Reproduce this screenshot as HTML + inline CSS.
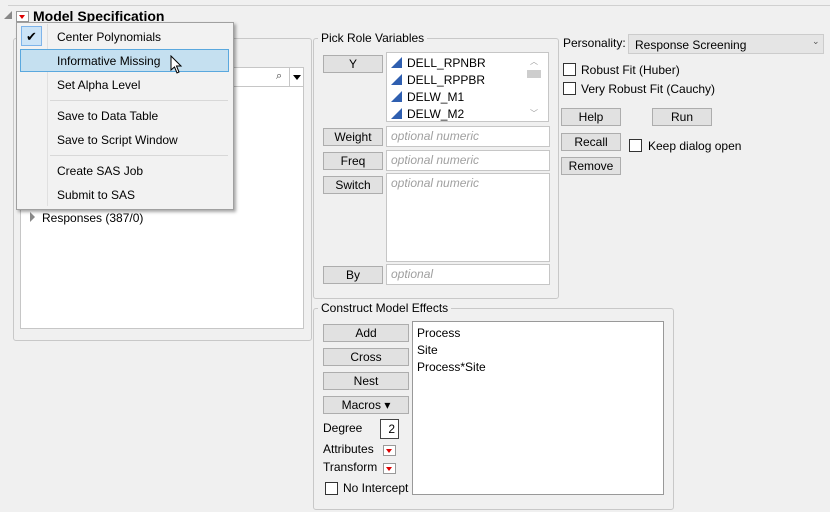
<!DOCTYPE html>
<html><head><style>
body{margin:0;width:830px;height:512px;background:#f0f0f0;font-family:"Liberation Sans",sans-serif;font-size:12px;color:#000;position:relative;overflow:hidden}
.a{position:absolute}
.g{position:absolute;border:1px solid #c8c8c8;border-radius:3px}
.gl{position:absolute;background:#f0f0f0;padding:0 3px;top:-8px;left:4px;font-size:12px}
.b{position:absolute;background:#e1e1e1;border:1px solid #adadad;text-align:center;line-height:16px;box-sizing:border-box;height:18px}
.f{position:absolute;background:#fff;border:1px solid #c6c6c6;box-sizing:border-box}
.ph{color:#a0a0a0;font-style:italic;padding:2px 4px}
.cb{position:absolute;width:11px;height:11px;border:1px solid #333;background:#fff}
.tri{display:inline-block;width:0;height:0;border-left:11px solid transparent;border-bottom:11px solid #2f5fb0;margin-right:5px;vertical-align:-1px}
.rd{position:absolute;width:11px;height:9px;border:1px solid #999;background:#fff}
.rd:after{content:"";position:absolute;left:2px;top:3px;border-left:3.5px solid transparent;border-right:3.5px solid transparent;border-top:4px solid #d00}
</style></head><body>
<div class="a" style="left:8px;top:5px;width:822px;height:1px;background:#d0d0d0"></div>
<div class="a" style="left:4px;top:11px;width:0;height:0;border-left:8px solid transparent;border-bottom:8px solid #888"></div>
<div class="rd" style="left:16px;top:11px"></div>
<div class="a" style="left:33px;top:8px;font-size:14px;font-weight:bold">Model Specification</div>

<div class="g" style="left:13px;top:38px;width:297px;height:301px"></div>
<div class="f" style="left:20px;top:67px;width:284px;height:20px"></div>
<div class="a" style="left:276px;top:70px;font-size:11px;color:#444">⌕</div>
<div class="a" style="left:289px;top:67px;width:1px;height:20px;background:#c6c6c6"></div>
<div class="a" style="left:293px;top:75px;border-left:4px solid transparent;border-right:4px solid transparent;border-top:5px solid #000"></div>
<div class="f" style="left:20px;top:86px;width:284px;height:243px"></div>
<div class="a" style="left:30px;top:212px;border-top:5px solid transparent;border-bottom:5px solid transparent;border-left:5px solid #888"></div>
<div class="a" style="left:42px;top:211px">Responses (387/0)</div>

<div class="a" style="left:16px;top:22px;width:216px;height:186px;background:#f2f2f2;border:1px solid #a0a0a0;box-shadow:2px 2px 3px rgba(0,0,0,.35)"></div>
<div class="a" style="left:47px;top:24px;width:1px;height:182px;background:#e0e0e0"></div>
<div class="a" style="left:21px;top:26px;width:21px;height:20px;background:#cce4f7;border:1px solid #7eb4ea;box-sizing:border-box;text-align:center;font-size:13px;line-height:19px">✔</div>
<div class="a" style="left:20px;top:49px;width:209px;height:23px;background:#c5e0f0;border:1px solid #5aa8de;box-sizing:border-box"></div>
<div class="a" style="left:50px;top:100px;width:178px;height:1px;background:#d8d8d8"></div>
<div class="a" style="left:50px;top:155px;width:178px;height:1px;background:#d8d8d8"></div>
<div class="a" style="left:57px;top:30px">Center Polynomials</div>
<div class="a" style="left:57px;top:54px">Informative Missing</div>
<div class="a" style="left:57px;top:78px">Set Alpha Level</div>
<div class="a" style="left:57px;top:109px">Save to Data Table</div>
<div class="a" style="left:57px;top:133px">Save to Script Window</div>
<div class="a" style="left:57px;top:164px">Create SAS Job</div>
<div class="a" style="left:57px;top:188px">Submit to SAS</div>
<svg class="a" style="left:170px;top:55px" width="13" height="20"><path d="M1 1 L1 15 L4.5 12 L7 18 L9 17 L6.5 11 L11 11 Z" fill="#fff" stroke="#000" stroke-width="1"/></svg>

<div class="g" style="left:313px;top:38px;width:244px;height:259px"><div class="gl">Pick Role Variables</div></div>
<div class="b" style="left:323px;top:55px;width:60px">Y</div>
<div class="f" style="left:386px;top:52px;width:163px;height:70px"></div>
<div class="a" style="left:527px;top:70px;width:14px;height:8px;background:#cdcdcd"></div>
<div class="a" style="left:530px;top:56px;font-size:8px;color:#999">︿</div>
<div class="a" style="left:530px;top:108px;font-size:8px;color:#999">﹀</div>
<div class="a" style="left:391px;top:55px;line-height:17px"><span class="tri"></span>DELL_RPNBR<br><span class="tri"></span>DELL_RPPBR<br><span class="tri"></span>DELW_M1<br><span class="tri"></span>DELW_M2</div>
<div class="b" style="left:323px;top:128px;width:60px">Weight</div>
<div class="f ph" style="left:386px;top:126px;width:164px;height:21px">optional numeric</div>
<div class="b" style="left:323px;top:152px;width:60px">Freq</div>
<div class="f ph" style="left:386px;top:150px;width:164px;height:21px">optional numeric</div>
<div class="b" style="left:323px;top:176px;width:60px">Switch</div>
<div class="f ph" style="left:386px;top:173px;width:164px;height:89px">optional numeric</div>
<div class="b" style="left:323px;top:266px;width:60px">By</div>
<div class="f ph" style="left:386px;top:264px;width:164px;height:21px">optional</div>

<div class="g" style="left:313px;top:308px;width:359px;height:200px"><div class="gl">Construct Model Effects</div></div>
<div class="b" style="left:323px;top:324px;width:86px">Add</div>
<div class="b" style="left:323px;top:348px;width:86px">Cross</div>
<div class="b" style="left:323px;top:372px;width:86px">Nest</div>
<div class="b" style="left:323px;top:396px;width:86px">Macros ▾</div>
<div class="a" style="left:323px;top:421px">Degree</div>
<div class="f" style="left:380px;top:419px;width:19px;height:20px;border-color:#444;text-align:right;padding:2px 3px 0 0">2</div>
<div class="a" style="left:323px;top:442px">Attributes</div>
<div class="rd" style="left:383px;top:445px"></div>
<div class="a" style="left:323px;top:460px">Transform</div>
<div class="rd" style="left:383px;top:463px"></div>
<div class="cb" style="left:325px;top:482px"></div>
<div class="a" style="left:343px;top:481px">No Intercept</div>
<div class="f" style="left:412px;top:321px;width:252px;height:174px;border-color:#999;padding:3px 4px;line-height:17px">Process<br>Site<br>Process*Site</div>

<div class="a" style="left:563px;top:36px">Personality:</div>
<div class="a" style="left:628px;top:34px;width:196px;height:20px;background:#e5e5e5;border:1px solid #ccc;box-sizing:border-box;padding:3px 6px">Response Screening</div>
<div class="a" style="left:812px;top:36px;font-size:9px;color:#555">⌄</div>
<div class="cb" style="left:563px;top:63px"></div><div class="a" style="left:581px;top:63px">Robust Fit (Huber)</div>
<div class="cb" style="left:563px;top:82px"></div><div class="a" style="left:581px;top:82px">Very Robust Fit (Cauchy)</div>
<div class="b" style="left:561px;top:108px;width:60px">Help</div>
<div class="b" style="left:652px;top:108px;width:60px">Run</div>
<div class="b" style="left:561px;top:133px;width:60px">Recall</div>
<div class="cb" style="left:629px;top:139px"></div><div class="a" style="left:648px;top:139px">Keep dialog open</div>
<div class="b" style="left:561px;top:157px;width:60px">Remove</div>
</body></html>
